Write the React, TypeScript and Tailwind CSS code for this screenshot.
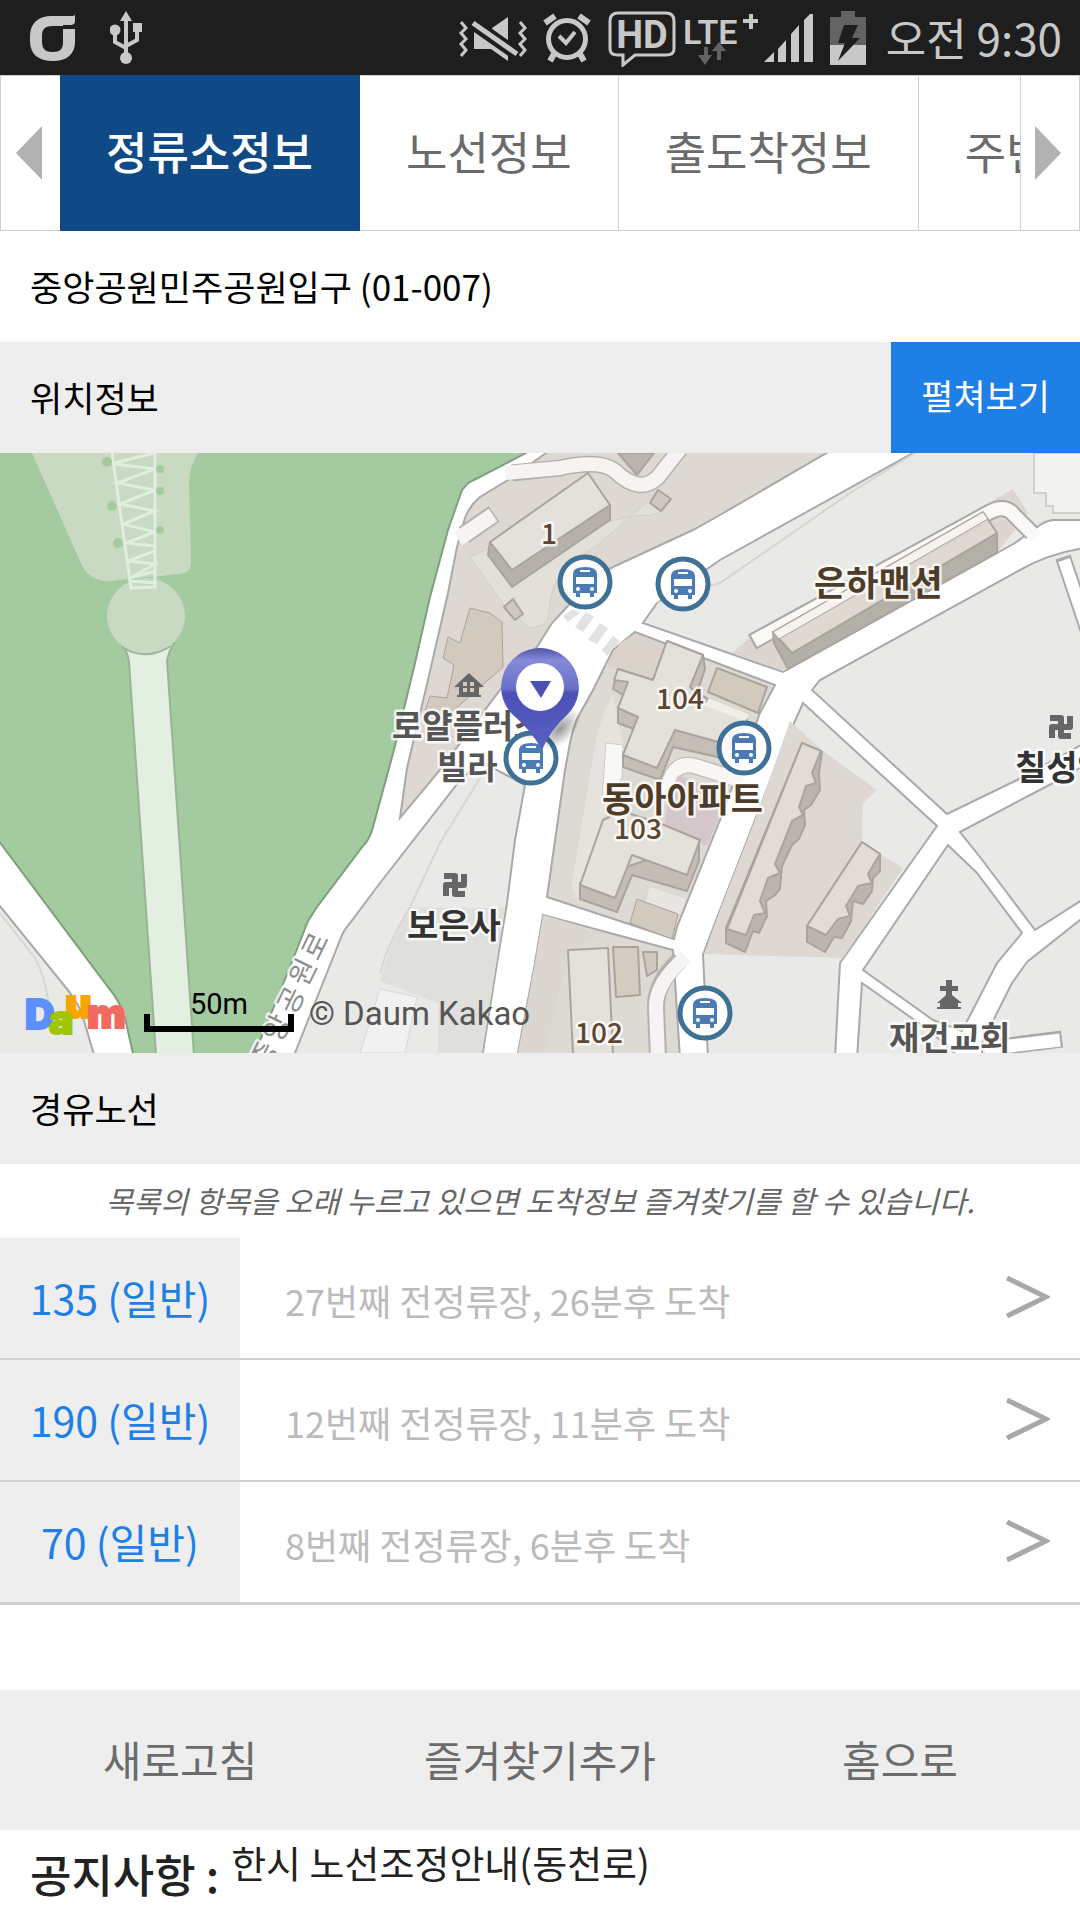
import clsx from "clsx";
import { useState } from "react";

const TABS = ["정류소정보", "노선정보", "출도착정보", "주변정보"];

const ROUTES = [
  { id: "135", name: "135 (일반)", arrival: "27번째 전정류장, 26분후 도착" },
  { id: "190", name: "190 (일반)", arrival: "12번째 전정류장, 11분후 도착" },
  { id: "70", name: "70 (일반)", arrival: "8번째 전정류장, 6분후 도착" },
];

const ACTIONS = ["새로고침", "즐겨찾기추가", "홈으로"];

const BUS_STOPS = [
  [585, 129],
  [683, 131],
  [531, 305],
  [744, 295],
  [705, 560],
];

const STREET_NAME = [
  { char: "로", x: 315, y: 493 },
  { char: "원", x: 303, y: 519 },
  { char: "공", x: 291, y: 547 },
  { char: "앙", x: 277, y: 575 },
  { char: "중", x: 264, y: 602 },
];

const StatusBar = () => (
  <div className="flex h-[75px] items-center justify-between bg-[#1e1e1e] pl-[30px] pr-[18px] text-[#c8c8c8]">
    <div className="flex items-center gap-[34px]">
      <svg className="h-[46px] w-[46px]" viewBox="0 0 46 46" fill="currentColor">
        <path
          fillRule="evenodd"
          d="M45 0V6C45 9 43 10 40 10H33V14H45V27C45 39 37 46 23 46C8 46 0 39 0 26V22C0 8 8 1 22 1H38C42 1 44 1 45 0ZM33 14V11H23C15 11 12 14 12 21V26C12 34 15 37 23 37C30 37 33 34 33 27Z"
        />
      </svg>
      <svg className="h-[54px] w-8" viewBox="0 0 32 54">
        <g fill="none" stroke="currentColor" strokeWidth="4">
          <path d="M16 8V46M5 20V31L16 37M27 16V29L16 35" />
        </g>
        <g fill="currentColor">
          <path d="M16 0L22 10H10Z" />
          <circle cx="5" cy="19" r="5.5" />
          <rect x="23" y="12" width="9" height="9" />
          <circle cx="16" cy="47" r="6" />
        </g>
      </svg>
    </div>
    <div className="flex items-center">
      <svg className="mr-3 h-[54px] w-[72px]" viewBox="0 0 72 54">
        <g fill="none" stroke="currentColor" strokeWidth="3">
          <path d="M3 11L8 17L3 22L8 28L3 33L8 39L3 45M62 11L67 17L62 22L67 28L62 33L67 39L62 45" />
        </g>
        <path d="M16 20V38H33L50 50V6L34 17V20Z" fill="currentColor" />
        <path d="M13 11L60 44" stroke="#1e1e1e" strokeWidth="13" />
        <path d="M15 12L59 43" stroke="currentColor" strokeWidth="5" />
      </svg>
      <svg className="mr-4 h-[54px] w-[50px]" viewBox="0 0 50 54">
        <g fill="none" stroke="currentColor">
          <circle cx="25" cy="28" r="18.5" strokeWidth="5" />
          <path d="M17 25L24 32L33 21" strokeWidth="4" />
          <path d="M3 12L13 5M47 12L37 5" strokeWidth="6" />
          <path d="M12 43L8 50M38 43L42 50" strokeWidth="6" />
        </g>
      </svg>
      <svg className="mr-2 h-[58px] w-[68px]" viewBox="0 0 68 58">
        <path
          d="M10 4H58Q66 4 66 12V40Q66 46 58 46H27L15 56V46H10Q2 46 2 40V12Q2 4 10 4Z"
          fill="none"
          stroke="currentColor"
          strokeWidth="3"
        />
        <text x="34" y="39" textAnchor="middle" fill="currentColor" className="font-['Roboto',sans-serif] text-[38px] font-bold">
          HD
        </text>
      </svg>
      <svg className="mr-1 h-[58px] w-[76px]" viewBox="0 0 76 58" fill="currentColor">
        <text x="-1" y="35" className="font-['Roboto',sans-serif] text-[34px] font-semibold">
          LTE
        </text>
        <path d="M59 12H74M67 5V20" stroke="currentColor" strokeWidth="4" />
        <path d="M20 38V46H14L21 56L28 46H24V38ZM33 51V42H28L35 33L42 42H37V51Z" fill="#636363" />
      </svg>
      <svg className="mr-4 h-12 w-[50px]" viewBox="0 0 50 48" fill="currentColor">
        <path d="M0 48L10 38V48ZM14 48V35L22 26V48ZM27 48V20L35 11V48ZM40 48V6L49 -3V48Z" />
      </svg>
      <svg className="mr-5 h-[54px] w-9" viewBox="0 0 36 54">
        <path d="M11 0H25V6H36V34H0V6H11Z" fill="#636363" />
        <path d="M0 34H36V54H0Z" fill="currentColor" />
        <path d="M14 14H28L22 27H30L8 50L15 32H8Z" fill="#1e1e1e" />
      </svg>
      <span className="text-[44px] leading-[75px]">오전 9:30</span>
    </div>
  </div>
);

const BusStop = ({ x, y }: { x: number; y: number }) => (
  <g transform={`translate(${x} ${y})`}>
    <circle r="25" fill="#fff" fillOpacity="0.9" stroke="#3f7096" strokeWidth="5" />
    <path
      d="M-12 -8Q-12 -15 0 -15Q12 -15 12 -8V11H9V15H5V11H-5V15H-9V11H-12Z"
      fill="#4a7bb5"
    />
    <path d="M-5 -12H5V-10H-5ZM-9 -5H9V2H-9Z" fill="#fff" />
    <circle cx="-7" cy="7" r="2" fill="#fff" />
    <circle cx="7" cy="7" r="2" fill="#fff" />
  </g>
);

const TempleMark = ({ x, y }: { x: number; y: number }) => (
  <path
    transform={`translate(${x} ${y})`}
    d="M-11 -9H0V9H10M9 -11V0H-9V11"
    fill="none"
    stroke="#666"
    strokeWidth="6"
    strokeLinejoin="round"
  />
);

const StopMap = () => (
  <svg
    className="block h-[600px] w-full bg-white font-['Noto_Sans_CJK_KR',sans-serif]"
    viewBox="0 0 1080 600"
    preserveAspectRatio="xMidYMid slice"
    role="img"
    aria-label="정류소 위치 지도"
  >
    <defs>
      <linearGradient id="pin" x1="0" y1="0" x2="0" y2="1">
        <stop offset="0" stopColor="#4f55a8" />
        <stop offset="0.12" stopColor="#858bd8" />
        <stop offset="0.4" stopColor="#6a70c8" />
        <stop offset="0.44" stopColor="#4c50b4" />
        <stop offset="1" stopColor="#5a60c4" />
      </linearGradient>
      <radialGradient id="pinShadow">
        <stop offset="0" stopColor="#000" stopOpacity="0.4" />
        <stop offset="1" stopColor="#000" stopOpacity="0" />
      </radialGradient>
    </defs>

    {/* city blocks, the roads are the white left between them */}
    <g stroke="#a9a9a8" strokeWidth="2" fill="#e9eae7">
      <path
        d="M-5 -5H526V0L468 30L462 37L448 77L430 144L415 210L395 293L373 374Q370 386 363 393L317 454L308 468L290 514L253 605H134L125 565Q120 548 108 534L-5 383Z"
        fill="#a4cba0"
        stroke="#7f9f7d"
      />
      <path d="M-5 447L67 536Q78 550 82 561L95 605H-5Z" />
      <path
        d="M553 -5L532 10L508 27L480 44Q470 52 465 65L457 94L448 140L428 227L407 315L400 365L440 317L500 237L537 194L552 170L567 154Q590 125 613 114L693 77L720 62L835 -5Z"
        fill="#ddd8d2"
      />
      <path d="M922 -5L720 107L710 114L657 150L643 170L720 197L783 219L997 100L1015 90L1037 74Q1045 68 1053 67H1085V-5Z" />
      <path
        d="M635 179L775 232L760 260L720 367L677 474L674 486L547 444L565 317L570 290Q573 275 578 264L593 237L613 197Z"
        fill="#ddd9d3"
      />
      <path d="M543 462L673 497L680 605H517L535 510Z" fill="#ddd9d3" />
      <path d="M803 250L937 373L840 510L835 605H708L703 502L707 491L720 457L755 367L782 297Z" />
      <path d="M812 237L820 227L1020 117Q1050 100 1085 95V290L1017 327L947 361Z" />
      <path d="M960 379L1053 330L1085 312V445L1035 477L980 404Z" />
      <path d="M948 392L953 397L977 420L1022 480L997 510L962 578L933 567L863 517Z" />
      <path d="M862 530L930 578L960 605H857Z" />
      <path d="M1085 463L1027 509L1012 530L982 590V605H1085Z" />
      <path d="M525 332L480 308L458 330L380 430L350 470Q343 478 340 487L293 605H482L497 510L507 450L515 387Z" />
    </g>

    {/* park */}
    <path d="M32 0L80 108Q88 129 110 128L180 121Q191 120 191 108L189 28Q190 12 198 0Z" fill="#c8dac2" />
    <path d="M122 191Q128 200 129 209L156 602H194L167 207Q169 198 174 190Z" fill="#e3efe1" stroke="#99b494" strokeWidth="2" />
    <ellipse cx="146" cy="163" rx="39" ry="38" fill="#c8dac2" />
    <path d="M122 194Q146 209 171 193" fill="none" stroke="#99b494" strokeWidth="2" />
    <path
      d="M112 0L131 135L155 134V0M114 10L155 0M114 11L155 16L117 30L155 37L120 51L155 58L123 71L155 79L126 90L155 93L155 98L128 108L155 111L130 125L155 118M130 128L155 130"
      fill="none"
      stroke="#dfeedd"
      strokeWidth="3"
    />
    <g fill="#a4cba0">
      <circle cx="107" cy="9" r="5" />
      <circle cx="112" cy="53" r="5" />
      <circle cx="118" cy="90" r="5" />
      <circle cx="160" cy="16" r="4" />
      <circle cx="160" cy="38" r="4" />
      <circle cx="160" cy="77" r="4" />
    </g>

    {/* lots */}
    <path d="M410 454L505 455L482 600H438V550L380 528Q390 490 410 454Z" fill="#dfe0db" />
    <path d="M480 325L440 390L410 454Q388 490 380 520" fill="none" stroke="#d6d7d3" strokeWidth="2" />
    <path d="M380 536L417 544L405 600H360Z" fill="#f1f1f1" stroke="#d8d8d6" />
    <path d="M0 460L35 505Q46 525 50 560" fill="none" stroke="#d6d7d3" strokeWidth="2" />
    <path d="M790 268L823 298L877 337L863 350L862 390L903 415L843 505L704 501L720 457L755 367Z" fill="#ddd8d2" />
    <path d="M732 200L748 186L1013 36L1028 60L997 100L783 218Z" fill="#ddd6d0" />
    <path d="M657 150L720 130L850 40L915 0" fill="none" stroke="#d4d5d2" strokeWidth="2" />
    <path d="M1034 0V40H1046V53H1053V60H1085V0Z" fill="#f3f3f1" stroke="#cfcfcc" strokeWidth="2" />
    <path
      d="M470 104L490 95L512 134L600 70L640 62Q660 66 668 48L655 42L600 90L567 112Q550 130 548 165L543 172L530 175L508 158Z"
      fill="#e3dfd9"
      stroke="#d3cec8"
    />
    <path d="M613 242Q600 260 592 310L572 430Q572 442 580 446L605 360L625 300Z" fill="#e6e3de" />
    <path d="M606 290L623 292L622 324L612 345H602Z" fill="#f8f8f7" stroke="#cfcac4" />
    <path d="M543 462L605 480L568 500L545 600H518L535 510Z" fill="#dcd6d0" />

    {/* alleys */}
    <g fill="none" strokeLinejoin="round">
      <path d="M512 20L560 15Q600 6 615 18Q640 42 658 24L680 -4" stroke="#b5b2ae" strokeWidth="17" />
      <path d="M505 20L560 15Q600 6 615 18Q640 42 658 24L680 -4" stroke="#f6f4f2" strokeWidth="14" />
      <path d="M464 82L494 61" stroke="#b5b2ae" strokeWidth="19" />
      <path d="M458 86L493 62" stroke="#f6f4f2" strokeWidth="15" />
      <path d="M752 189L988 60Q1005 50 1014 62L1032 80" stroke="#a9a9a8" strokeWidth="17" />
      <path d="M754 188L988 60Q1005 50 1014 62L1036 84" stroke="#fbf9f7" strokeWidth="13" />
      <path d="M1063 104L1092 190" stroke="#a9a9a8" strokeWidth="16" />
      <path d="M1064 107L1092 190" stroke="#fff" strokeWidth="12" />
      <path d="M1000 594L1062 586" stroke="#a9a9a8" strokeWidth="17" />
      <path d="M985 596L1060 587" stroke="#fff" strokeWidth="13" />
      <path d="M680 507Q655 530 656 555L658 605" stroke="#b5b2ae" strokeWidth="18" />
      <path d="M686 504Q655 530 656 555L658 605" stroke="#f6f4f2" strokeWidth="14" />
      <path d="M662 345L672 322Q680 308 698 314L738 326" stroke="#c4beb8" strokeWidth="17" />
      <path d="M662 346L672 322Q680 308 698 314L742 328" stroke="#f8f7f6" strokeWidth="14" />
    </g>
    <g fill="#e2e2e1">
      <path d="M563 163L573 156L580 160L568 169Z" />
      <path d="M575 174L586 159L594 164L583 179Z" />
      <path d="M588 187L600 170L608 175L597 191Z" />
      <path d="M602 197L613 183L620 188L607 203Z" />
    </g>

    {/* buildings */}
    <g stroke="#aaa49c" strokeWidth="2" strokeLinejoin="round">
      <path d="M610 52V67L512 134L488 102L490 89Z" fill="#b5b0a9" />
      <path d="M588 20L610 52L512 117L490 89Z" fill="#e4e0db" />
      <path d="M618 0L637 22L654 0Z" fill="#bbb4ad" />
      <path d="M658 37L671 46L661 58L650 50Z" fill="#cfc9c2" />
      <path d="M513 146L523 161L515 167L504 154Z" fill="#cfc9c2" />
      <path d="M470 155L490 160L502 169L503 214L477 237L448 262L425 258L430 243L447 245L454 212L443 205L448 184L460 190Z" fill="#d2cabf" strokeWidth="1" />
      <path d="M773 179L792 200L997 80V100L788 216L774 190Z" fill="#b3b0a7" />
      <path d="M773 179L983 59L997 80L792 200Z" fill="#dfd9d2" fillOpacity="0.85" />
      <path d="M773 179L983 59L988 66L779 186Z" fill="#f6f2ee" strokeWidth="1" />

      <path d="M635 181L667 193L653 227L618 216L606 212L620 190Z" fill="#dad2cb" stroke="none" />
      <path d="M717 215L767 234L758 260L708 239Z" fill="#d3cabe" />
      <path d="M667 188L703 202L705 216L697 240L747 267L722 305L673 294L660 327L623 314V302L634 276L618 270V255L623 242L613 236L618 216L653 227Z" fill="#c4beb7" />
      <path d="M667 188L703 202L690 234L703 247L747 267L722 290L675 277L657 315L623 302L638 264L618 255L628 229L614 227L618 216L653 227Z" fill="#e4e0da" />
      <path d="M707 249L747 265" fill="none" stroke="#f1eeea" strokeWidth="8" />

      <path d="M678 322L700 330L719 336V364L707 393L664 374L668 345Z" fill="#d3c7cc" stroke="none" />
      <path d="M580 430V446L617 459L632 422L687 438L699 408V389Z" fill="#c3bdb5" />
      <path d="M603 367L622 358L664 372L700 387L687 422L632 402L615 445L580 432Z" fill="#e4e0da" />
      <path d="M650 434L686 446L680 462L645 450Z" fill="#e9e6e2" stroke="none" />
      <path d="M637 446L678 461L672 486L630 470Z" fill="#d2cabf" strokeWidth="1" />
      <path d="M568 497L608 495L613 602H573Z" fill="#e3e1d9" />
      <path d="M613 494H638L640 542L616 544Z" fill="#d5cdc2" />
      <path d="M643 499H657V517L647 523Z" fill="#d0c9c0" />

      <path d="M802 290L822 299L819 320L820 337L811 352L804 357L805 372L799 386L792 392L782 413L780 436L774 443L766 448L767 463L759 480L753 478L745 499L726 490V475Z" fill="#bcb5ae" />
      <path d="M802 290L821 298L812 320L816 330L806 333L799 354L803 362L792 368L775 411L780 420L768 425L760 448L765 460L754 462L746 482L727 476Z" fill="#e2dbd6" />
      <path d="M862 389L880 401V418L873 425L872 438L863 451L853 448L851 468L842 485L834 484L825 499L807 489V473Z" fill="#bcb5ae" />
      <path d="M862 389L880 401L868 421L872 430L858 433L846 453L850 463L838 466L826 482L807 473Z" fill="#e2dbd6" />
    </g>

    {/* place labels */}
    <g stroke="#fff" strokeOpacity="0.8" strokeWidth="5" strokeLinejoin="round" className="font-bold [paint-order:stroke]">
      <g fill="#5c4631" className="text-[28px] font-medium">
        <text x="541" y="91">1</text>
        <text x="656" y="256">104</text>
        <text x="614" y="386">103</text>
        <text x="575" y="590">102</text>
      </g>
      <g fill="#4d3c28" className="text-[35px]">
        <text x="814" y="143">은하맨션</text>
        <text x="602" y="359">동아아파트</text>
      </g>
      <g fill="#555" className="text-[33px]">
        <text x="392" y="285">로얄플러스</text>
        <text x="437" y="326">빌라</text>
        <text x="889" y="597">재건교회</text>
      </g>
      <g fill="#333" className="text-[34px]">
        <text x="407" y="485">보은사</text>
        <text x="1015" y="327">칠성암</text>
      </g>
      <g fill="#8d8d8d" textAnchor="middle" className="text-[28px] font-normal">
        {STREET_NAME.map(({ char, x, y }) => (
          <text key={char} transform={`translate(${x} ${y}) rotate(-64)`} y="10">
            {char}
          </text>
        ))}
      </g>
    </g>
    <TempleMark x={1061} y={274} />
    <TempleMark x={455} y={432} />
    <path
      d="M469 220L484 234H479V242H481V244H457V242H459V234H454ZM463 233H467V229H463ZM470 233H474V229H470ZM463 239H467V235H463ZM470 239H474V235H470Z"
      fill="#666"
      fillRule="evenodd"
    />
    <path
      d="M946 527H952V533H958V538H952V542L962 550H958V554H961V556H937V554H940V550H937L946 542V538H940V533H946Z"
      fill="#666"
    />

    {BUS_STOPS.map(([x, y]) => (
      <BusStop key={`${x}-${y}`} x={x} y={y} />
    ))}

    <ellipse cx="560" cy="276" rx="26" ry="14" transform="rotate(-45 560 276)" fill="url(#pinShadow)" />
    <path
      d="M540 195A39 39 0 0 1 568 261Q550 277 542 297Q531 277 512 261A39 39 0 0 1 540 195Z"
      fill="url(#pin)"
    />
    <circle cx="540" cy="234" r="24" fill="#fff" />
    <path d="M530 228H551L541 245Z" fill="#4c50b4" />

    <g strokeWidth="2" className="font-['Inter',sans-serif] text-[41px] font-black">
      <text x="25" y="576" fill="#5c8fff" stroke="#5c8fff">D</text>
      <text x="65" y="565" fill="#f7a600" stroke="#f7a600">u</text>
      <text x="49" y="581" fill="#9fc600" stroke="#9fc600">a</text>
      <text x="87" y="575" fill="#f26a5e" stroke="#f26a5e">m</text>
    </g>
    <path d="M147 561V576H291V561" fill="none" stroke="#000" strokeWidth="6" />
    <g className="font-['Roboto',sans-serif]">
      <text x="190" y="561" className="text-[29px]">50m</text>
      <text x="309" y="572" fill="#555" className="text-[33px]">© Daum Kakao</text>
    </g>
  </svg>
);

export default function App() {
  const [activeTab, setActiveTab] = useState(TABS[0]);

  return (
    <div className="min-h-screen w-full bg-white font-['Noto_Sans_CJK_KR',sans-serif] text-black">
      <StatusBar />

      <nav className="flex h-[156px] border border-[#d0d0d0]">
        <button aria-label="이전 탭" className="flex w-[59px] shrink-0 items-center justify-center pr-1">
          <svg className="h-[54px] w-[26px]" viewBox="0 0 26 54">
            <path d="M26 0V54L0 27Z" fill="#b2b2b2" />
          </svg>
        </button>
        <div className="-my-px flex min-w-0 flex-1 overflow-hidden">
          {TABS.map((tab) => (
            <button
              key={tab}
              onClick={() => setActiveTab(tab)}
              className={clsx(
                "shrink-0 whitespace-nowrap border-y border-r px-[46px] pb-1 text-[45px]",
                tab === activeTab
                  ? "border-[#0f4a87] bg-[#0f4a87] font-medium text-white"
                  : "border-[#d0d0d0] text-[#6b6b6b]"
              )}
            >
              {tab}
            </button>
          ))}
        </div>
        <button
          aria-label="다음 탭"
          className="flex w-[59px] shrink-0 items-center justify-center border-l border-[#d0d0d0] pr-1"
        >
          <svg className="h-[54px] w-[26px]" viewBox="0 0 26 54">
            <path d="M0 0V54L26 27Z" fill="#b2b2b2" />
          </svg>
        </button>
      </nav>

      <h1 className="flex h-[111px] items-center px-[30px] text-[35px]">
        중앙공원민주공원입구 (01-007)
      </h1>

      <div className="flex h-[111px] items-stretch justify-between bg-[#eee]">
        <h2 className="flex items-center px-[30px] text-[35px]">위치정보</h2>
        <button className="bg-[#1e80e6] px-[30px] pb-1 text-[35px] text-white">펼쳐보기</button>
      </div>

      <StopMap />

      <h2 className="flex h-[111px] items-center bg-[#eee] px-[30px] text-[35px]">경유노선</h2>
      <p className="h-[74px] text-center text-[30px] italic leading-[72px] text-[#666]">
        목록의 항목을 오래 누르고 있으면 도착정보 즐겨찾기를 할 수 있습니다.
      </p>

      <ul className="mb-[85px] border-b border-[#d0d0d0]">
        {ROUTES.map((route) => (
          <li key={route.id} className="border-b-2 border-[#d0d0d0]">
            <a href={`#${route.id}`} className="flex h-[120px] items-center pr-[30px]">
              <span className="flex h-full w-[240px] shrink-0 items-center justify-center bg-[#eee] text-[41px] text-[#1e80e6]">
                {route.name}
              </span>
              <span className="flex-1 pl-[45px] pt-1 text-[36px] text-[#bbb]">
                {route.arrival}
              </span>
              <svg className="h-11 w-11" viewBox="0 0 44 44">
                <path d="M1 2L40 21L1 40" fill="none" stroke="#a8a8a8" strokeWidth="5" />
              </svg>
            </a>
          </li>
        ))}
      </ul>

      <div className="grid h-[140px] grid-cols-3 bg-[#eee]">
        {ACTIONS.map((action) => (
          <button key={action} className="pb-1 text-[42px] text-[#6b6b6b]">
            {action}
          </button>
        ))}
      </div>

      <div className="flex items-start gap-3 px-[30px] pt-1 text-[#222]">
        <span className="text-[45px] font-medium leading-[80px]">공지사항 :</span>
        <a href="#notice" className="text-[38px] leading-[56px]">
          한시 노선조정안내(동천로)
        </a>
      </div>
    </div>
  );
}
